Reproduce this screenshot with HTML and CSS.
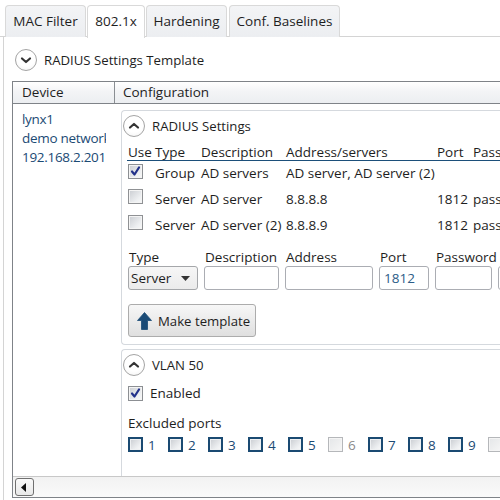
FILE: index.html
```html
<!DOCTYPE html>
<html>
<head>
<meta charset="utf-8">
<link rel="stylesheet" href="styles.css">
</head>
<body>
<div class="tabs">
  <div class="tab t1">MAC Filter</div>
  <div class="tab t2 active">802.1x</div>
  <div class="tab t3">Hardening</div>
  <div class="tab t4">Conf. Baselines</div>
</div>
<div class="panel">
  <div class="exp-head template">
    <span class="circle"><svg width="22" height="22" viewBox="0 0 22 22"><path d="M7 9.5 L11 13 L15 9.5" fill="none" stroke="#333" stroke-width="2.2" stroke-linecap="round" stroke-linejoin="round"/></svg></span>
    <span class="exp-title">RADIUS Settings Template</span>
  </div>
  <div class="grid">
    <div class="ghead">
      <div class="hcell dev">Device</div>
      <div class="hcell conf">Configuration</div>
    </div>
    <div class="gbody">
      <div class="devcol">
        <div class="devline">lynx1</div>
        <div class="devline">demo network</div>
        <div class="devline">192.168.2.201</div>
      </div>
      <div class="confcol">
        <div class="box radius">
          <div class="exp-head inner">
            <span class="circle"><svg width="22" height="22" viewBox="0 0 22 22"><path d="M7 12.5 L11 9 L15 12.5" fill="none" stroke="#333" stroke-width="2.2" stroke-linecap="round" stroke-linejoin="round"/></svg></span>
            <span class="exp-title">RADIUS Settings</span>
          </div>
          <div class="table">
            <div class="trow thead">
              <div class="c use">Use</div><div class="c type">Type</div><div class="c desc">Description</div><div class="c addr">Address/servers</div><div class="c port">Port</div><div class="c pass">Password</div>
            </div>
            <div class="trow">
              <div class="c use"><span class="cb checked"><svg width="13" height="13" viewBox="0 0 13 13"><path d="M3 6.5 L5.5 9.5 L10 2.5" fill="none" stroke="#22318a" stroke-width="2.2" stroke-linecap="round" stroke-linejoin="round"/></svg></span></div>
              <div class="c type">Group</div><div class="c desc">AD servers</div><div class="c addr">AD server, AD server (2)</div><div class="c port"></div><div class="c pass"></div>
            </div>
            <div class="trow">
              <div class="c use"><span class="cb"></span></div>
              <div class="c type">Server</div><div class="c desc">AD server</div><div class="c addr">8.8.8.8</div><div class="c port">1812</div><div class="c pass">password</div>
            </div>
            <div class="trow">
              <div class="c use"><span class="cb"></span></div>
              <div class="c type">Server</div><div class="c desc">AD server (2)</div><div class="c addr">8.8.8.9</div><div class="c port">1812</div><div class="c pass">password</div>
            </div>
          </div>
          <div class="form">
            <div class="field f-type"><div class="lbl">Type</div><div class="combo"><span>Server</span><svg width="9" height="5" viewBox="0 0 9 5"><path d="M0 0 L9 0 L4.5 5 Z" fill="#333"/></svg></div></div>
            <div class="field f-desc"><div class="lbl">Description</div><div class="input"></div></div>
            <div class="field f-addr"><div class="lbl">Address</div><div class="input"></div></div>
            <div class="field f-port"><div class="lbl">Port</div><div class="input val">1812</div></div>
            <div class="field f-pass"><div class="lbl">Password</div><div class="input"></div></div>
            <div class="field f-pass"><div class="lbl">&nbsp;</div><div class="input"></div></div>
          </div>
          <div class="btn-row">
            <div class="btn"><svg width="15" height="18" viewBox="0 0 15 18"><path d="M7.5 0.5 L14.5 8.5 L10.5 8.5 L10.5 17.5 L4.5 17.5 L4.5 8.5 L0.5 8.5 Z" fill="#1b4b76" stroke="#1b4b76" stroke-width="0.8" stroke-linejoin="round"/></svg><span>Make template</span></div>
          </div>
        </div>
        <div class="box vlan">
          <div class="exp-head inner">
            <span class="circle"><svg width="22" height="22" viewBox="0 0 22 22"><path d="M7 12.5 L11 9 L15 12.5" fill="none" stroke="#333" stroke-width="2.2" stroke-linecap="round" stroke-linejoin="round"/></svg></span>
            <span class="exp-title">VLAN 50</span>
          </div>
          <div class="enabled"><span class="cb checked"><svg width="13" height="13" viewBox="0 0 13 13"><path d="M3 6.5 L5.5 9.5 L10 2.5" fill="none" stroke="#22318a" stroke-width="2.2" stroke-linecap="round" stroke-linejoin="round"/></svg></span><span>Enabled</span></div>
          <div class="excl">Excluded ports</div>
          <div class="ports">
            <div class="pt"><span class="cb dark"></span><span>1</span></div>
            <div class="pt"><span class="cb dark"></span><span>2</span></div>
            <div class="pt"><span class="cb dark"></span><span>3</span></div>
            <div class="pt"><span class="cb dark"></span><span>4</span></div>
            <div class="pt"><span class="cb dark"></span><span>5</span></div>
            <div class="pt dis"><span class="cb"></span><span>6</span></div>
            <div class="pt"><span class="cb dark"></span><span>7</span></div>
            <div class="pt"><span class="cb dark"></span><span>8</span></div>
            <div class="pt"><span class="cb dark"></span><span>9</span></div>
            <div class="pt dis"><span class="cb"></span><span>10</span></div>
          </div>
        </div>
      </div>
    </div>
    <div class="hscroll">
      <div class="sbtn"><svg width="6" height="9" viewBox="0 0 6 9"><path d="M5 0 L0 4.5 L5 9 Z" fill="#111"/></svg></div>
    </div>
  </div>
</div>
</body>
</html>
```
FILE: styles.css
```css
* { box-sizing: border-box; }
html, body { margin: 0; padding: 0; }
body {
  width: 500px;
  height: 500px;
  overflow: hidden;
  background: #fff;
  font-family: "Open Sans", "Noto Sans", sans-serif;
  font-size: 13.5px;
  color: #1e1e1e;
}
.tabs {
  display: flex;
  padding: 5px 0 0 5px;
  height: 37px;
  border-bottom: 1px solid #d4d4d4;
}
.tab {
  height: 32px;
  line-height: 31px;
  margin-right: 1px;
  border: 1px solid #d9d9d9;
  border-bottom: none;
  border-radius: 4px 4px 0 0;
  background: linear-gradient(#f3f4f6, #eceef1);
  white-space: nowrap;
  text-align: center;
  flex: none;
}
.t1 { width: 81px; }
.t2 { width: 58px; }
.t3 { width: 81px; margin-right: 2px; }
.t4 { width: 111px; }
.tab.active {
  background: #fff;
  height: 33px;
  margin-bottom: -1px;
}
.panel {
  margin-left: 3px;
  border-left: 1px solid #d4d4d4;
  height: 463px;
}
.exp-head {
  display: flex;
  align-items: center;
}
.exp-head.template {
  height: 44px;
  padding: 2px 0 0 11px;
}
.circle {
  width: 22px;
  height: 22px;
  border-radius: 50%;
  border: 1px solid #a4a4a4;
  background: radial-gradient(circle at 50% 35%, #fff 55%, #f0f0f0);
  display: flex;
  align-items: center;
  justify-content: center;
  flex: none;
}
.circle svg { display: block; margin: -1px; }
.exp-title { margin-left: 7px; font-size: 13.2px; }
.grid {
  margin-left: 8px;
  border: 1px solid #7f8388;
  border-right: none;
  height: 417px;
  display: flex;
  flex-direction: column;
  overflow: hidden;
}
.ghead {
  display: flex;
  height: 22px;
  border-bottom: 1px solid #7f8388;
  background: linear-gradient(#ffffff, #f3f4f6 45%, #eceef1);
  flex: none;
}
.hcell {
  line-height: 20px;
  white-space: nowrap;
}
.hcell.dev {
  width: 102px;
  padding-left: 9px;
  border-right: 1px solid #8a8e93;
}
.hcell.conf { padding-left: 8px; }
.gbody {
  flex: 1;
  display: flex;
  overflow: hidden;
}
.devcol {
  width: 102px;
  padding: 6px 9px 0 9px;
  overflow: hidden;
  flex: none;
  color: #1b4a74;
}
.devline {
  line-height: 19px;
  white-space: nowrap;
  overflow: hidden;
  letter-spacing: -0.3px;
}
.confcol {
  flex: 1;
  padding: 6px 0 0 6px;
  overflow: hidden;
}
.box {
  border: 1px solid #d5d9de;
  border-right: none;
  border-radius: 4px 0 0 4px;
  width: 420px;
}
.box.radius { height: 235px; }
.box.vlan { margin-top: 4px; height: 200px; }
.exp-head.inner {
  height: 28px;
  padding: 1px 0 0 1px;
}
.table {
  margin: 4px 0 0 5px;
  width: 500px;
}
.trow {
  display: flex;
  height: 26px;
  padding-bottom: 3px;
  align-items: center;
  white-space: nowrap;
}
.trow.thead {
  height: 18px;
  padding-bottom: 0;
  border-bottom: 1px solid #1c4f7a;
}
.c { flex: none; padding-left: 2px; }
.c.use { width: 26px; padding-left: 1px; }
.c.type { width: 46px; }
.c.desc { width: 85px; }
.c.addr { width: 151px; }
.c.port { width: 36px; }
.c.pass { width: 80px; }
.cb {
  display: inline-flex;
  align-items: center;
  justify-content: center;
  width: 15px;
  height: 15px;
  border: 1px solid #8f9194;
  background: linear-gradient(135deg, #c9ccd1, #eef0f2 70%, #f8f8f8);
  box-shadow: inset 0 0 0 1px #f4f4f4;
  flex: none;
}
.cb.checked { border-color: #8c8f93; }
.cb svg { display: block; }
.cb.dark {
  border: 2px solid #1a4a72;
  box-shadow: inset 0 0 0 1px #eef0f2;
}
.form {
  display: flex;
  gap: 6px;
  margin: 9px 0 0 6px;
}
.field { flex: none; }
.f-type { width: 70px; }
.f-desc { width: 75px; }
.f-addr { width: 88px; }
.f-port { width: 50px; }
.f-pass { width: 57px; }
.lbl {
  line-height: 18px;
  padding-left: 1px;
  white-space: nowrap;
}
.input, .combo {
  height: 24px;
  border: 1px solid #abadb3;
  border-radius: 3px;
  background: #fff;
  line-height: 22px;
  padding-left: 4px;
}
.input.val { color: #2c5d88; }
.combo {
  display: flex;
  align-items: center;
  justify-content: space-between;
  padding: 0 7px 0 2px;
  background: linear-gradient(#f6f6f6, #ebebeb);
  border-color: #a5a7aa;
}
.btn-row { margin: 14px 0 0 6px; }
.btn {
  display: inline-flex;
  align-items: center;
  width: 128px;
  height: 33px;
  border: 1px solid #acacac;
  border-radius: 3px;
  background: linear-gradient(#f7f7f7, #ebebeb 50%, #dfdfdf);
  padding-left: 8px;
  font-size: 13.2px;
  white-space: nowrap;
}
.btn svg { display: block; margin-right: 6px; margin-top: 1px; flex: none; }
.enabled {
  display: flex;
  align-items: center;
  gap: 7px;
  height: 26px;
  margin: 2px 0 0 6px;
}
.excl {
  margin: 8px 0 0 6px;
  line-height: 18px;
}
.ports {
  display: flex;
  margin: 3px 0 0 6px;
  height: 19px;
  align-items: center;
}
.pt {
  width: 40px;
  display: flex;
  align-items: center;
  gap: 5px;
  flex: none;
  color: #1b4a74;
}
.pt.dis { color: #8a8a8a; }
.pt.dis .cb {
  border-color: #b5b7ba;
  background: linear-gradient(135deg, #e4e6e8, #f6f6f6);
}
.hscroll {
  height: 21px;
  flex: none;
  border-top: 1px solid #c8c8c8;
  background: linear-gradient(#f2f2f2, #fafafa);
  padding: 1px 0 0 2px;
}
.sbtn {
  width: 19px;
  height: 18px;
  border: 1px solid #707070;
  border-radius: 3px;
  background: linear-gradient(#fafafa, #e9e9e9);
  display: flex;
  align-items: center;
  justify-content: center;
  padding-right: 1px;
}
```
